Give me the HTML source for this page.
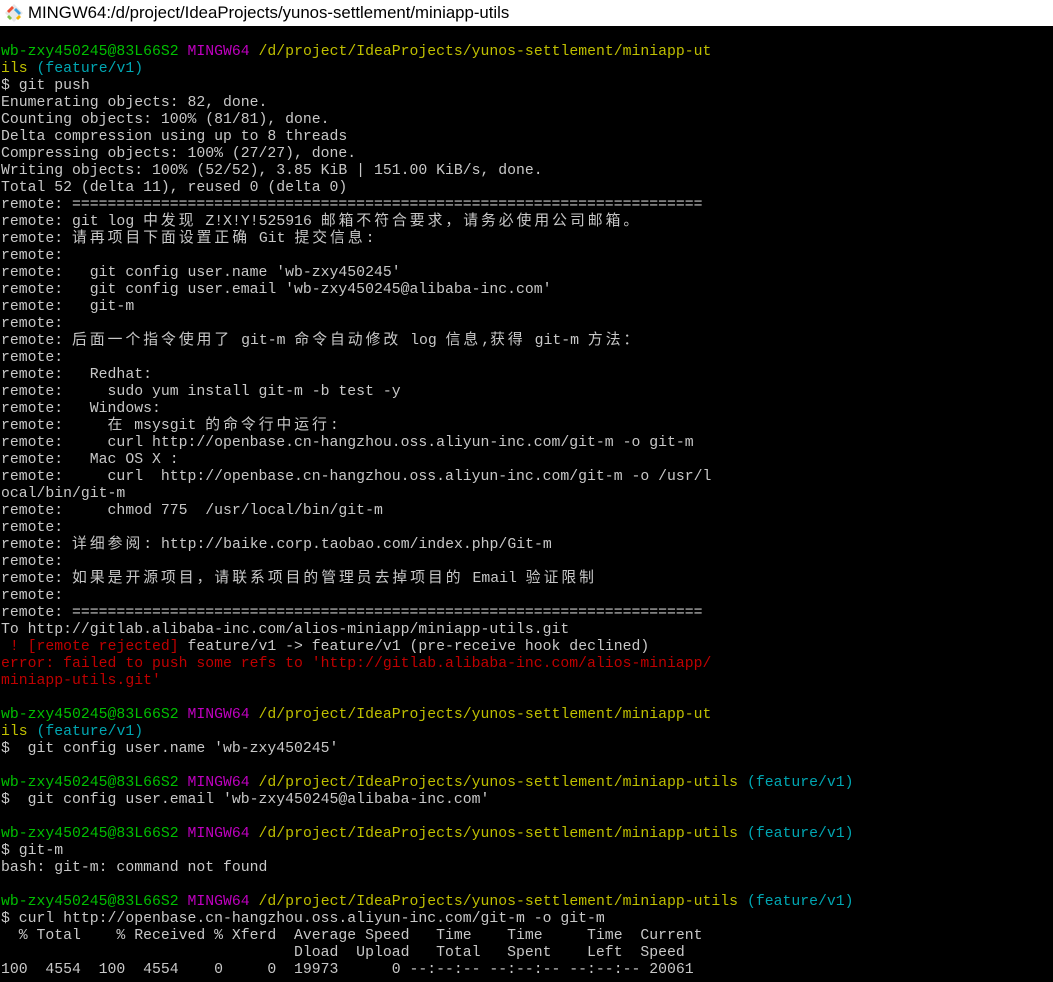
<!DOCTYPE html>
<html><head><meta charset="utf-8"><style>
body{margin:0;width:1053px;height:982px;background:#000;overflow:hidden}
.t{height:26px;background:#fff;position:relative;font-family:"Liberation Sans",sans-serif;font-size:16.8px;color:#000}
.t span{position:absolute;left:28px;top:3px}
.term{position:absolute;top:44px;left:1px;font-family:"Liberation Mono","Noto Sans CJK SC",monospace;font-size:14.8px;line-height:17px;color:#c8c8c8}
.term div{height:17px;white-space:pre;overflow:visible}
.c{font-family:"Noto Sans CJK SC",sans-serif;letter-spacing:3px;line-height:0}
.g{color:#00bf00}.m{color:#bf00bf}.y{color:#bfbf00}.cy{color:#00a6b2}.r{color:#bf0000}
</style></head><body>
<div class="t"><svg width="20" height="20" style="position:absolute;left:4px;top:3px" viewBox="0 0 20 20"><path d="M10 1 L19 10 L10 19 L1 10Z" fill="#e8e8e8"/><path d="M3 8 L8 3 L10 5 L5 10Z" fill="#f05033"/><path d="M12 5 L17 10 L15 12 L10 7Z" fill="#3aa0e0"/><path d="M5 12 L8 15 L6 17 L3 14Z" fill="#7cc24a"/><path d="M12 15 L15 12 L17 14 L14 17Z" fill="#f4b400"/></svg><span>MINGW64:/d/project/IdeaProjects/yunos-settlement/miniapp-utils</span></div>
<div class="term"><div><span class="g">wb-zxy450245@83L66S2</span> <span class="m">MINGW64</span> <span class="y">/d/project/IdeaProjects/yunos-settlement/miniapp-ut</span></div><div><span class="y">ils</span> <span class="cy">(feature/v1)</span></div><div>$ git push</div><div>Enumerating objects: 82, done.</div><div>Counting objects: 100% (81/81), done.</div><div>Delta compression using up to 8 threads</div><div>Compressing objects: 100% (27/27), done.</div><div>Writing objects: 100% (52/52), 3.85 KiB | 151.00 KiB/s, done.</div><div>Total 52 (delta 11), reused 0 (delta 0)</div><div>remote: =======================================================================</div><div>remote: git log <span class="c">中发现</span> Z!X!Y!525916 <span class="c">邮箱不符合要求，请务必使用公司邮箱。</span></div><div>remote: <span class="c">请再项目下面设置正确</span> Git <span class="c">提交信息</span>:</div><div>remote:</div><div>remote:   git config user.name 'wb-zxy450245'</div><div>remote:   git config user.email 'wb-zxy450245@alibaba-inc.com'</div><div>remote:   git-m</div><div>remote:</div><div>remote: <span class="c">后面一个指令使用了</span> git-m <span class="c">命令自动修改</span> log <span class="c">信息</span>,<span class="c">获得</span> git-m <span class="c">方法：</span></div><div>remote:</div><div>remote:   Redhat:</div><div>remote:     sudo yum install git-m -b test -y</div><div>remote:   Windows:</div><div>remote:     <span class="c">在</span> msysgit <span class="c">的命令行中运行</span>:</div><div>remote:     curl http://openbase.cn-hangzhou.oss.aliyun-inc.com/git-m -o git-m</div><div>remote:   Mac OS X :</div><div>remote:     curl  http://openbase.cn-hangzhou.oss.aliyun-inc.com/git-m -o /usr/l</div><div>ocal/bin/git-m</div><div>remote:     chmod 775  /usr/local/bin/git-m</div><div>remote:</div><div>remote: <span class="c">详细参阅</span>: http://baike.corp.taobao.com/index.php/Git-m</div><div>remote:</div><div>remote: <span class="c">如果是开源项目，请联系项目的管理员去掉项目的</span> Email <span class="c">验证限制</span></div><div>remote:</div><div>remote: =======================================================================</div><div>To http://gitlab.alibaba-inc.com/alios-miniapp/miniapp-utils.git</div><div> <span class="r">! [remote rejected]</span> feature/v1 -&gt; feature/v1 (pre-receive hook declined)</div><div class="r">error: failed to push some refs to 'http://gitlab.alibaba-inc.com/alios-miniapp/</div><div class="r">miniapp-utils.git'</div><div></div><div><span class="g">wb-zxy450245@83L66S2</span> <span class="m">MINGW64</span> <span class="y">/d/project/IdeaProjects/yunos-settlement/miniapp-ut</span></div><div><span class="y">ils</span> <span class="cy">(feature/v1)</span></div><div>$  git config user.name 'wb-zxy450245'</div><div></div><div><span class="g">wb-zxy450245@83L66S2</span> <span class="m">MINGW64</span> <span class="y">/d/project/IdeaProjects/yunos-settlement/miniapp-utils</span> <span class="cy">(feature/v1)</span></div><div>$  git config user.email 'wb-zxy450245@alibaba-inc.com'</div><div></div><div><span class="g">wb-zxy450245@83L66S2</span> <span class="m">MINGW64</span> <span class="y">/d/project/IdeaProjects/yunos-settlement/miniapp-utils</span> <span class="cy">(feature/v1)</span></div><div>$ git-m</div><div>bash: git-m: command not found</div><div></div><div><span class="g">wb-zxy450245@83L66S2</span> <span class="m">MINGW64</span> <span class="y">/d/project/IdeaProjects/yunos-settlement/miniapp-utils</span> <span class="cy">(feature/v1)</span></div><div>$ curl http://openbase.cn-hangzhou.oss.aliyun-inc.com/git-m -o git-m</div><div>  % Total    % Received % Xferd  Average Speed   Time    Time     Time  Current</div><div>                                 Dload  Upload   Total   Spent    Left  Speed</div><div>100  4554  100  4554    0     0  19973      0 --:--:-- --:--:-- --:--:-- 20061</div></div>
</body></html>
